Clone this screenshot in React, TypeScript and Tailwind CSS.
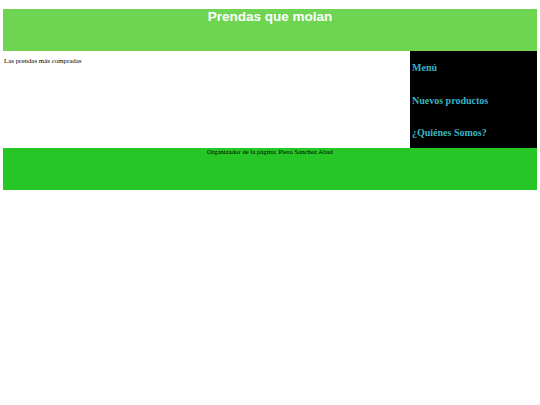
export default function App() {
  const links = ["Menú", "Nuevos productos", "¿Quiénes Somos?"];
  return (
    <div className="w-[540px] h-[405px] bg-white px-[3px] pt-[9px] font-['Liberation_Serif',serif]">
      {/* Header */}
      <header className="h-[42px] bg-[#6dd551] text-center">
        <h1 className="font-['Liberation_Sans',Arial,sans-serif] text-[13.5px] font-bold leading-[15px] text-white">
          Prendas que molan
        </h1>
      </header>

      {/* Main + sidebar */}
      <div className="flex h-[97px]">
        <main className="flex-1 pt-[6px] pl-[1px]">
          <p className="text-[6.9px] leading-[8px] text-black">
            Las prendas más compradas
          </p>
        </main>
        <nav className="w-[127px] bg-black pt-[11px] pl-[2px]">
          <ul className="flex flex-col gap-[20.5px]">
            {links.map((l) => (
              <li
                key={l}
                className="text-[10px] font-bold leading-[12px] text-[#38b4c0]"
              >
                {l}
              </li>
            ))}
          </ul>
        </nav>
      </div>

      {/* Footer */}
      <footer className="h-[42px] bg-[#26c626] text-center">
        <p className="text-[6.75px] leading-[8px] text-black">
          Organizador de la página: Piero Sanchez Abad
        </p>
      </footer>
    </div>
  );
}
